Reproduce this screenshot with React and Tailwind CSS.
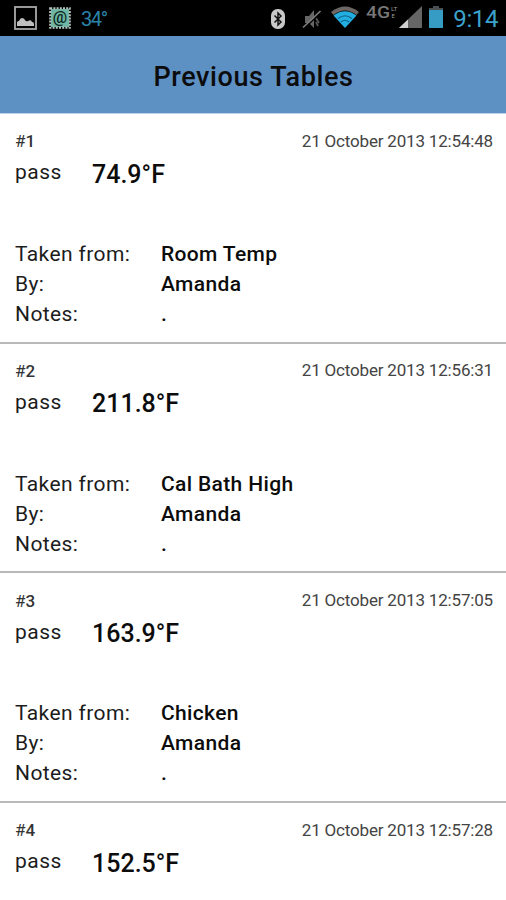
import React from "react";

const readings = [
  { id: 1, date: "21 October 2013 12:54:48", temp: "74.9°F", from: "Room Temp", by: "Amanda", notes: "." },
  { id: 2, date: "21 October 2013 12:56:31", temp: "211.8°F", from: "Cal Bath High", by: "Amanda", notes: "." },
  { id: 3, date: "21 October 2013 12:57:05", temp: "163.9°F", from: "Chicken", by: "Amanda", notes: "." },
  { id: 4, date: "21 October 2013 12:57:28", temp: "152.5°F" },
];

const PictureIcon = () => (
  <svg className="h-[24px] w-[23px]" viewBox="0 0 23 24">
    <rect x="1" y="1" width="21" height="22" fill="none" stroke="#a9a9a9" strokeWidth="1.8" />
    <path d="M3 20v-4q1-1 2-1 1-3 3-3 2 0 3 2 1 2 3 1 3-2 4 1 2 0 2 2v2z" fill="#c0c0c0" />
  </svg>
);

const StampIcon = () => (
  <svg className="h-[22px] w-[22px]" viewBox="0 0 22 22">
    <rect x="2" y="2" width="18" height="18" fill="#6fb5a3" />
    <rect x="1.2" y="1.2" width="19.6" height="19.6" fill="none" stroke="#b5c4be" strokeWidth="2" strokeDasharray="2 1.2" />
    <text x="11" y="15.5" textAnchor="middle" fontSize="16" fontWeight="500" fill="#0a2520">@</text>
  </svg>
);

const BluetoothIcon = () => (
  <svg className="h-[20px] w-[14px]" viewBox="0 0 14 20">
    <rect x="0" y="0" width="14" height="20" rx="6.5" fill="#c9c9c9" />
    <path d="M3.5 6.5 10 13 7 16V4l3 3-6.5 6.5" fill="none" stroke="#111" strokeWidth="1.5" />
  </svg>
);

const MuteIcon = () => (
  <svg className="h-[20px] w-[20px]" viewBox="0 0 20 20">
    <path d="M3 7h4l5-6v18l-5-5H3z" fill="#666" />
    <path d="M14 9l3 5M14 13l2 4" stroke="#555" strokeWidth="1.8" />
    <path d="M2 19.5 19 3.5" stroke="#000" strokeWidth="1.5" />
    <path d="M1 18.5 18.5 2" stroke="#7d7d7d" strokeWidth="1.7" />
  </svg>
);

const WifiIcon = () => (
  <svg className="h-[22px] w-[28px]" viewBox="0 0 28 22">
    <path d="M0 6Q14-5 28 6L25.5 9Q14 0 2.5 9z" fill="#6c6665" />
    <path d="M2.5 9.5Q14 1 25.5 9.5L14 22z" fill="#23aee2" />
    <path d="M7 12.5Q14 7 21 12.5M10 16Q14 12.5 18 16" fill="none" stroke="#10668c" strokeWidth="1.2" />
  </svg>
);

const SignalIcon = () => (
  <svg className="h-[22px] w-[23px]" viewBox="0 0 23 22">
    <path d="M0 22 23 0v22z" fill="#656565" />
    <path d="M0 22 9 13.4V22z" fill="#d0d0d0" />
  </svg>
);

const BatteryIcon = () => (
  <svg className="h-[22px] w-[14px]" viewBox="0 0 14 22">
    <path d="M4 0h6v2h4v3H0V2h4z" fill="#4a4f52" />
    <rect y="4" width="14" height="18" fill="#369cc4" />
  </svg>
);

const StatusBar = () => (
  <div className="flex h-9 shrink-0 items-start bg-black text-[#3ba3cb]">
    <div className="ml-[14px] mt-[6px]"><PictureIcon /></div>
    <div className="ml-[12px] mt-[7px]"><StampIcon /></div>
    <span className="ml-[10px] mt-[7px] text-[20px] leading-[24px] tracking-[-1.4px] text-[#2b83a8]">34°</span>
    <div className="ml-auto mt-[9px]"><BluetoothIcon /></div>
    <div className="ml-[17px] mt-[9px]"><MuteIcon /></div>
    <div className="ml-[9px] mt-[6px]"><WifiIcon /></div>
    <svg className="ml-[7px] mt-[4px] h-[20px] w-[33px] overflow-visible" viewBox="0 0 33 20">
      <text x="0" y="14" fontSize="17" fontWeight="500" textLength="24" lengthAdjust="spacingAndGlyphs" fill="#777">4G</text>
      <text x="25" y="6.5" fontSize="6" fill="#999" textLength="6.5" lengthAdjust="spacingAndGlyphs">LT</text>
      <text x="25.5" y="14" fontSize="6" fill="#999">E</text>
    </svg>
    <div className="mt-[6px]"><SignalIcon /></div>
    <div className="ml-[7px] mt-[6px]"><BatteryIcon /></div>
    <span className="ml-[10px] mr-[8px] mt-[6px] text-[24px] leading-[26px] tracking-[-0.4px]">9:14</span>
  </div>
);

const DetailRow = ({ label, value }) => (
  <div className="flex h-[30px] items-center">
    <span className="w-[146px] text-[21px] tracking-[0.4px] text-[#1c1c1c]">{label}</span>
    <span className="text-[21px] font-medium tracking-[0.35px]">{value}</span>
  </div>
);

const ReadingCard = ({ item }) => (
  <div className="h-[229.67px] shrink-0 border-b-2 border-[#b9b9b9] pl-[15px] pr-[13px] pt-[17px]">
    <div className="flex h-[21px] items-center justify-between">
      <span className="pt-px text-[17px] text-[#333]">
        #<span className="font-medium">{item.id}</span>
      </span>
      <span className="text-[17px] tracking-[-0.18px] text-[#444]">{item.date}</span>
    </div>
    <div className="flex h-[43px] items-center">
      <span className="mb-px w-[77px] text-[21px] tracking-[0.5px] text-[#1c1c1c]">pass</span>
      <span className="mt-[2px] text-[25px] font-medium">{item.temp}</span>
    </div>
    {item.from && (
      <div className="mt-[44.6px]">
        <DetailRow label="Taken from:" value={item.from} />
        <DetailRow label="By:" value={item.by} />
        <DetailRow label="Notes:" value={item.notes} />
      </div>
    )}
  </div>
);

export default function App() {
  return (
    <div className="flex h-[900px] w-[506px] flex-col overflow-hidden bg-white font-['Roboto',sans-serif] text-[#0c0c0c]">
      <StatusBar />
      <header className="flex h-[78px] shrink-0 items-center justify-center border-b border-[#bdd3ea] bg-[#5d90c3] pt-[5px]">
        <h1 className="pl-px text-[27px] font-medium tracking-[0.6px]">Previous Tables</h1>
      </header>
      {readings.map((item) => (
        <ReadingCard key={item.id} item={item} />
      ))}
    </div>
  );
}
